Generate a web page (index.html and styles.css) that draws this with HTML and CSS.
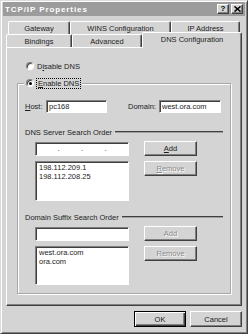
FILE: index.html
```html
<!DOCTYPE html>
<html lang="en">
<head>
    <meta charset="UTF-8">
    <title>TCP/IP Properties</title>
    <link rel="stylesheet" href="styles.css">
</head>
<body>

    <div class="dialog">

        <!-- Title bar -->
        <div class="titlebar">
            <span class="title">TCP/IP Properties</span>
            <div class="caption-buttons">
                <span class="cap-btn">?</span>
                <span class="cap-btn">
                    <svg width="7" height="6" viewBox="0 0 7 6">
                        <path d="M0.5 0.5 L6.5 5.5 M6.5 0.5 L0.5 5.5" stroke="#000" stroke-width="1.6" fill="none"/>
                    </svg>
                </span>
            </div>
        </div>

        <!-- Tabs -->
        <div class="tabs">
            <div class="tab-row back-row">
                <div class="tab tab-gateway">Gateway</div>
                <div class="tab tab-wins">WINS Configuration</div>
                <div class="tab tab-ip">IP Address</div>
            </div>
            <div class="tab-row front-row">
                <div class="tab tab-bindings">Bindings</div>
                <div class="tab tab-advanced">Advanced</div>
                <div class="tab tab-dns selected">DNS Configuration</div>
            </div>
        </div>

        <!-- DNS page -->
        <div class="panel">
            <label class="radio-row">
                <span class="radio"></span>
                <span>D<u>i</u>sable DNS</span>
            </label>

            <div class="group">
                <div class="group-legend">
                    <span class="radio checked"><span class="radio-dot"></span></span>
                    <span class="focus"><u>E</u>nable DNS</span>
                </div>

                <div class="host-row">
                    <label class="host-label"><u>H</u>ost:</label>
                    <input class="field host-field" type="text" value="pc168">
                    <label class="domain-label">Domain:</label>
                    <input class="field domain-field" type="text" value="west.ora.com">
                </div>

                <div class="section-title">
                    <span>DNS Server Search Order</span>
                    <span class="rule"></span>
                </div>
                <div class="order-grid">
                    <div class="field ip-field">
                        <span class="octet"></span><span class="dot">.</span>
                        <span class="octet"></span><span class="dot">.</span>
                        <span class="octet"></span><span class="dot">.</span>
                        <span class="octet"></span>
                    </div>
                    <button class="btn"><u>A</u>dd</button>
                    <div class="listbox list-servers">
                        <div>198.112.209.1</div>
                        <div>198.112.208.25</div>
                    </div>
                    <button class="btn" disabled><u>R</u>emove</button>
                </div>

                <div class="section-title second">
                    <span>Domain Suffix Search Order</span>
                    <span class="rule"></span>
                </div>
                <div class="order-grid">
                    <input class="field" type="text">
                    <button class="btn" disabled>Add</button>
                    <div class="listbox list-suffix">
                        <div>west.ora.com</div>
                        <div>ora.com</div>
                    </div>
                    <button class="btn" disabled>Remove</button>
                </div>
            </div>
        </div>

        <!-- OK / Cancel -->
        <div class="footer">
            <button class="btn default-btn">OK</button>
            <button class="btn">Cancel</button>
        </div>
    </div>

</body>
</html>
```

FILE: styles.css
```css
body {
    margin: 0;
    font-family: "Liberation Sans", Arial, sans-serif;
    font-size: 7.5px;
    color: #1c1c1c;
    background: #d4d4d4;
}

.dialog {
    width: 248px;
    height: 334px;
    box-sizing: border-box;
    background: #d4d4d4;
    border: 1px solid;
    border-color: #dcdcdc #404040 #404040 #dcdcdc;
    box-shadow: inset 1px 1px #fff, inset -1px -1px #808080;
    padding: 1px 2px 2px 2px;
    display: flex;
    flex-direction: column;
}

/* Title bar */
.titlebar {
    height: 14px;
    background: #9c9c9c;
    display: flex;
    align-items: center;
    justify-content: space-between;
    padding: 0 2px 0 2px;
}

.title {
    color: #fff;
    font-weight: bold;
    font-size: 8px;
    letter-spacing: 0.9px;
}

.caption-buttons {
    display: flex;
    gap: 2px;
}

.cap-btn {
    width: 12px;
    height: 10px;
    box-sizing: border-box;
    background: #d4d4d4;
    border: 1px solid;
    border-color: #fff #404040 #404040 #fff;
    box-shadow: inset -1px -1px #808080;
    display: flex;
    align-items: center;
    justify-content: center;
    font-weight: bold;
    font-size: 8px;
    line-height: 1;
    color: #000;
}

/* Tabs */
.tabs {
    margin-top: 5px;
}

.tab-row {
    display: flex;
    height: 13px;
}

.back-row {
    padding-left: 5px;
}

.front-row {
    padding-left: 3px;
}

.tab {
    height: 13px;
    box-sizing: border-box;
    border: 1px solid;
    border-bottom: none;
    border-color: #fff #404040 #fff #fff;
    box-shadow: inset -1px 0 #808080;
    border-radius: 2px 2px 0 0;
    display: flex;
    align-items: center;
    justify-content: center;
    background: #d4d4d4;
}

.tab-gateway { width: 62px; }
.tab-wins { width: 101px; }
.tab-ip { width: 69px; }
.tab-bindings { width: 66px; }
.tab-advanced { width: 70px; }
.tab-dns { width: 100px; }

.tab.selected {
    height: 16px;
    margin-top: -2px;
    padding-bottom: 2px;
    position: relative;
    z-index: 1;
}

/* Page */
.panel {
    margin: 0 3px;
    height: 259px;
    box-sizing: border-box;
    border: 1px solid;
    border-color: #fff #404040 #404040 #fff;
    box-shadow: inset -1px -1px #808080;
    display: flex;
    flex-direction: column;
}

.radio-row {
    display: flex;
    align-items: center;
    gap: 3px;
    height: 10px;
    margin: 13px 0 0 19px;
}

.radio {
    width: 8px;
    height: 8px;
    box-sizing: border-box;
    border-radius: 50%;
    border: 1px solid;
    border-color: #808080 #fff #fff #808080;
    box-shadow: inset 1px 1px #404040;
    background: #fff;
    display: flex;
    align-items: center;
    justify-content: center;
}

.radio-dot {
    width: 3px;
    height: 3px;
    border-radius: 50%;
    background: #000;
}

.group {
    margin: 12px 10px 0 10px;
    height: 211px;
    box-sizing: border-box;
    border: 1px solid #a8a8a8;
    box-shadow: inset 1px 1px #fff, 1px 1px #fff;
    display: flex;
    flex-direction: column;
}

.group-legend {
    align-self: flex-start;
    display: flex;
    align-items: center;
    gap: 3px;
    height: 10px;
    margin: -6px 0 0 6px;
    padding: 0 2px;
    background: #d4d4d4;
}

.focus {
    outline: 1px dotted #000;
    padding: 0 1px;
    line-height: 9px;
}

.host-row {
    display: flex;
    align-items: center;
    margin: 12px 0 0 7px;
}

.host-label {
    width: 21px;
}

.host-field {
    width: 61px;
}

.domain-label {
    width: 31px;
    margin-left: 21px;
}

.domain-field {
    width: 62px;
}

.field {
    height: 13px;
    box-sizing: border-box;
    border: 1px solid;
    border-color: #808080 #fff #fff #808080;
    box-shadow: inset 1px 1px #404040;
    background: #fff;
    font-family: inherit;
    font-size: 7.5px;
    color: #1c1c1c;
    padding: 0 2px;
    margin: 0;
    outline: none;
}

.section-title {
    display: flex;
    align-items: center;
    gap: 3px;
    height: 10px;
    margin: 14px 7px 0 7px;
}

.section-title.second {
    margin-top: 11px;
}

.rule {
    flex: 1;
    border-top: 1px solid #404040;
    border-bottom: 1px solid #a0a0a0;
}

.order-grid {
    display: grid;
    grid-template-columns: 94px 53px;
    column-gap: 15px;
    row-gap: 5px;
    margin: 4px 0 0 17px;
}

.order-grid .field {
    width: 94px;
    height: 14px;
    align-self: end;
}

.ip-field {
    display: flex;
    align-items: center;
    padding: 0 0 2px 0;
}

.octet {
    flex: 1;
}

.dot {
    width: 2px;
    text-align: center;
}

.listbox {
    box-sizing: border-box;
    border: 1px solid;
    border-color: #808080 #fff #fff #808080;
    box-shadow: inset 1px 1px #404040;
    background: #fff;
    padding: 2px 3px;
    line-height: 8.5px;
}

.list-servers {
    height: 40px;
}

.list-suffix {
    height: 39px;
}

.btn {
    height: 15px;
    box-sizing: border-box;
    padding: 0;
    background: #d4d4d4;
    border: 1px solid;
    border-color: #fff #404040 #404040 #fff;
    box-shadow: inset -1px -1px #808080;
    font-family: inherit;
    font-size: 7.5px;
    color: #1c1c1c;
    align-self: start;
}

.btn:disabled {
    color: #8a8a8a;
    text-shadow: 1px 1px #fff;
}

.footer {
    display: flex;
    justify-content: flex-end;
    gap: 4px;
    margin-top: 5px;
    padding-right: 3px;
}

.footer .btn {
    width: 52px;
    height: 16px;
}

.default-btn {
    border: 1px solid #000;
    box-shadow: inset 1px 1px #fff, inset -1px -1px #404040, inset -2px -2px #808080;
}
```
